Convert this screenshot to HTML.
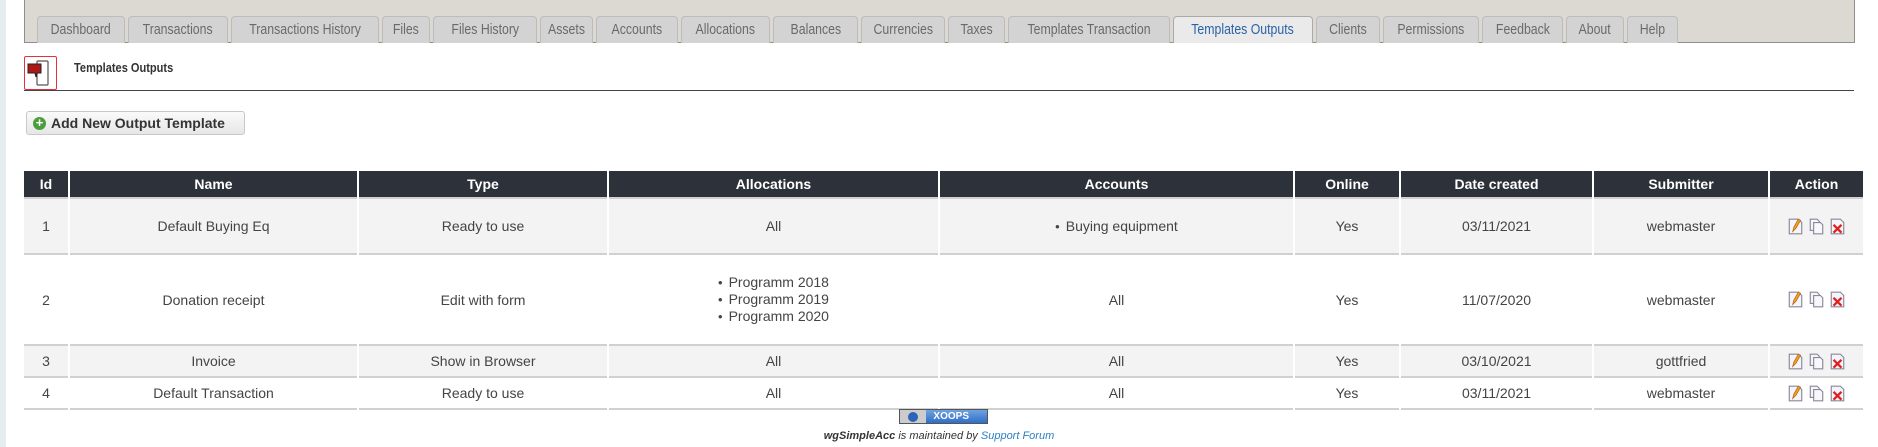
<!DOCTYPE html>
<html><head><meta charset="utf-8"><style>
*{box-sizing:border-box;margin:0;padding:0}
body{width:1878px;height:447px;background:#fff;font-family:"Liberation Sans",sans-serif;position:relative;overflow:hidden;color:#444}
.strip{position:absolute;left:0;top:0;width:6px;height:447px;background:#e6edf0}
.bar{position:absolute;left:24px;top:0;width:1831px;height:43px;background:#dcd9d3;border:1px solid #8f8f8f;border-top:none}
.tab{position:absolute;top:16px;height:27px;background:#d3d3d3;border:1px solid #bcbcbc;border-bottom:none;border-radius:4px 4px 0 0;font-size:15px;color:#6a6a6a;text-align:center;line-height:26px;white-space:nowrap;overflow:hidden}
.tab span{display:inline-block;transform:scaleX(0.82);transform-origin:center}
.tab.act{background:#eaeaea;color:#2a62a8;border-color:#aaa}
.icon{position:absolute;left:24px;top:56px;width:33px;height:34px;border:1px solid #e0343a;border-radius:2px}
.title{position:absolute;left:74px;top:60px;font-size:13px;font-weight:bold;color:#333;transform:scaleX(0.85);transform-origin:left}
.hr{position:absolute;left:24px;top:90px;width:1830px;height:1px;background:#444}
.btn{position:absolute;left:26px;top:111px;width:219px;height:24px;border:1px solid #c8c8c8;border-radius:3px;background:linear-gradient(#fafafa,#e6e6e6);font-size:14px;font-weight:bold;color:#333;line-height:22px;padding-left:24px}
.btn i{position:absolute;left:6px;top:5px;width:13px;height:13px;border-radius:50%;background:#4a9e3c;color:#fff;font-style:normal;font-size:13px;line-height:12px;text-align:center}
table{position:absolute;left:24px;top:171px;width:1839px;border-collapse:collapse;font-size:14px;color:#444}
th{background:#2d313a;color:#fff;font-weight:bold;height:27px;border-left:2px solid #fff;font-size:14px}
th:first-child,td:first-child{border-left:none}
td{text-align:center;border-left:2px solid #fff;border-top:2px solid #d0d0d0}
tr.o td{background:#f2f3f2}
tr.e td{background:#fff}
ul{list-style:none;text-align:left;display:inline-block;line-height:17px}
li:before{content:"•";margin-right:6px;font-size:13px}
.ai{display:inline-block;width:15px;height:17px;margin:0 3px;vertical-align:middle;position:relative}
.foot{position:absolute;top:409px;left:899px;width:89px;height:15px;border:1px solid #555;background:linear-gradient(#6fa3e0,#2f6ec9);color:#fff;font-size:10px;font-weight:bold;line-height:13px;text-align:right;padding-right:18px}
.foot b{position:absolute;left:0;top:0;width:26px;height:13px;background:#ccc}
.foot b:after{content:"";position:absolute;left:8px;top:2px;width:10px;height:10px;border-radius:50%;background:#2d63b8}
.ftxt{position:absolute;top:430px;left:0;width:1878px;text-align:center;font-size:11px;font-style:italic;color:#333}
.ftxt a{color:#2a7fc2;text-decoration:none}
</style></head><body>
<div class="strip"></div>
<div class="bar"></div>
<div class="tab" style="left:37px;width:88px"><span>Dashboard</span></div>
<div class="tab" style="left:128px;width:100px"><span>Transactions</span></div>
<div class="tab" style="left:231px;width:148px"><span>Transactions History</span></div>
<div class="tab" style="left:382px;width:48px"><span>Files</span></div>
<div class="tab" style="left:433px;width:104px"><span>Files History</span></div>
<div class="tab" style="left:540px;width:53px"><span>Assets</span></div>
<div class="tab" style="left:596px;width:82px"><span>Accounts</span></div>
<div class="tab" style="left:681px;width:89px"><span>Allocations</span></div>
<div class="tab" style="left:773px;width:85px"><span>Balances</span></div>
<div class="tab" style="left:861px;width:84px"><span>Currencies</span></div>
<div class="tab" style="left:948px;width:57px"><span>Taxes</span></div>
<div class="tab" style="left:1008px;width:162px"><span>Templates Transaction</span></div>
<div class="tab act" style="left:1173px;width:140px"><span>Templates Outputs</span></div>
<div class="tab" style="left:1316px;width:64px"><span>Clients</span></div>
<div class="tab" style="left:1383px;width:96px"><span>Permissions</span></div>
<div class="tab" style="left:1482px;width:81px"><span>Feedback</span></div>
<div class="tab" style="left:1566px;width:58px"><span>About</span></div>
<div class="tab" style="left:1627px;width:51px"><span>Help</span></div>
<div class="icon"><svg width="31" height="32" viewBox="0 0 31 32"><rect x="12" y="4" width="11" height="24" rx="1" fill="#fff" stroke="#555" stroke-width="1.2"/><path d="M3 7h13v9h-4l-1 4-1-4H3z" fill="#b01818" stroke="#222"/></svg></div>
<div class="title">Templates Outputs</div>
<div class="hr"></div>
<div class="btn"><i>+</i>Add New Output Template</div>
<table>
<tr><th style="width:45px">Id</th><th style="width:289px">Name</th><th style="width:250px">Type</th><th style="width:331px">Allocations</th><th style="width:355px">Accounts</th><th style="width:106px">Online</th><th style="width:193px">Date created</th><th style="width:176px">Submitter</th><th>Action</th></tr>
<tr class="o" style="height:56px"><td>1</td><td>Default Buying Eq</td><td>Ready to use</td><td>All</td><td><ul><li>Buying equipment</li></ul></td><td>Yes</td><td>03/11/2021</td><td>webmaster</td><td class="act"></td></tr>
<tr class="e" style="height:91px"><td>2</td><td>Donation receipt</td><td>Edit with form</td><td><ul><li>Programm 2018</li><li>Programm 2019</li><li>Programm 2020</li></ul></td><td>All</td><td>Yes</td><td>11/07/2020</td><td>webmaster</td><td class="act"></td></tr>
<tr class="o" style="height:32px"><td>3</td><td>Invoice</td><td>Show in Browser</td><td>All</td><td>All</td><td>Yes</td><td>03/10/2021</td><td>gottfried</td><td class="act"></td></tr>
<tr class="e" style="height:32px;border-bottom:2px solid #d0d0d0"><td>4</td><td>Default Transaction</td><td>Ready to use</td><td>All</td><td>All</td><td>Yes</td><td>03/11/2021</td><td>webmaster</td><td class="act"></td></tr>
</table>
<div class="foot"><b></b>XOOPS</div>
<div class="ftxt"><b>wgSimpleAcc</b> is maintained by <a>Support Forum</a></div>
<script>
var ic='<svg class="ai" viewBox="0 0 13 15"><path d="M1 1h8l3 3v10H1z" fill="#f4f4fa" stroke="#889"/><path d="M4 12l1-4 4-7 2 1-4 7z" fill="#f0a020" stroke="#b06010" stroke-width=".6"/></svg><svg class="ai" viewBox="0 0 13 15"><path d="M1 1h6l2 2v8H1z" fill="#f4f4fa" stroke="#889"/><path d="M4 4h6l2 2v8H4z" fill="#f8f8fc" stroke="#889"/></svg><svg class="ai" viewBox="0 0 13 15"><path d="M1 1h8l3 3v10H1z" fill="#f4f4fa" stroke="#889"/><path d="M3 6l7 7M10 6l-7 7" stroke="#e02020" stroke-width="2"/></svg>';
document.querySelectorAll('td.act').forEach(function(t){t.innerHTML=ic;});
</script>
</body></html>
